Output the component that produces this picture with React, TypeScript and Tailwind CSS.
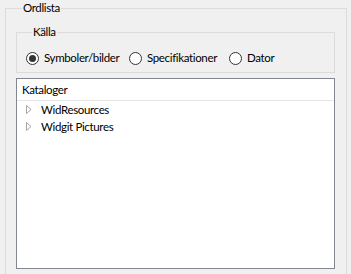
import React from "react";

function Radio({ checked, label, className }: { checked?: boolean; label: string; className?: string }) {
  return (
    <div className={"flex items-center h-[16px] " + (className ?? "")}>
      <div className="w-[13px] h-[13px] rounded-full border border-[#333333] bg-white flex items-center justify-center shrink-0">
        {checked && <div className="w-[7px] h-[7px] rounded-full bg-[#333333]" />}
      </div>
      <span className="ml-[5px] whitespace-nowrap">{label}</span>
    </div>
  );
}

function TreeItem({ label }: { label: string }) {
  return (
    <div className="flex items-center h-[17px]">
      <svg width="6" height="9" viewBox="0 0 6 9" className="ml-[9px] shrink-0">
        <path d="M0.5 0.5 L5 4.5 L0.5 8.5 Z" fill="none" stroke="#a6a6a6" strokeWidth="1" />
      </svg>
      <span className="ml-[9px] whitespace-nowrap">{label}</span>
    </div>
  );
}

export default function App() {
  return (
    <div
      className="w-[351px] h-[274px] bg-[#f0f0f0] overflow-hidden text-[11.5px] tracking-[-0.35px] text-black"
      style={{ fontFamily: 'Lato, sans-serif' }}
    >
      <fieldset className="ml-[5px] w-[342px] h-[300px] border border-[#dcdcdc] pl-[10px] pr-[11px]">
        <legend className="ml-[6px] px-[1px] h-[16px] leading-[16px]">Ordlista</legend>
        <fieldset className="mt-[8px] w-[319px] border border-[#dcdcdc] pl-[9px] pb-[6px]">
          <legend className="ml-[6px] px-[1px] h-[16px] leading-[16px]">Källa</legend>
          <div className="flex mt-[10px]">
            <Radio checked label="Symboler/bilder" className="w-[103px]" />
            <Radio label="Specifikationer" className="w-[100px]" />
            <Radio label="Dator" />
          </div>
        </fieldset>
        <div className="mt-[5px] w-[319px] h-[191px] border border-[#828790] bg-white">
          <div className="h-[22px] border-b border-[#e5e5e5] flex items-center pl-[5px]">Kataloger</div>
          <TreeItem label="WidResources" />
          <TreeItem label="Widgit Pictures" />
        </div>
      </fieldset>
    </div>
  );
}
